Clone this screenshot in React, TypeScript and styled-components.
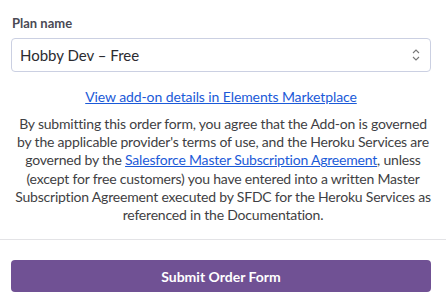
import styled, { createGlobalStyle } from 'styled-components'

const Global = createGlobalStyle`
  html, body { margin: 0; padding: 0; background: #fff; }
  body { font-family: Lato, "Open Sans", sans-serif; color: #3f3f44; }
`

export default function App() {
  return (
    <>
      <Global />
      <Page>
        <Section>
          <Label htmlFor="plan">Plan name</Label>
          <SelectWrap>
            <Select id="plan" defaultValue="hobby">
              <option value="hobby">Hobby Dev – Free</option>
            </Select>
            <Chevron width="8" height="14" viewBox="0 0 8 14">
              <path d="M1 5 L4 2 L7 5" />
              <path d="M1 9 L4 12 L7 9" />
            </Chevron>
          </SelectWrap>
          <Details>
            <a href="#">View add-on details in Elements Marketplace</a>
          </Details>
          <Terms>
            By submitting this order form, you agree that the Add-on is governed by the
            applicable provider's terms of use, and the Heroku Services are governed by
            the <a href="#">Salesforce Master Subscription Agreement</a>, unless (except
            for free customers) you have entered into a written Master Subscription
            Agreement executed by SFDC for the Heroku Services as referenced in the
            Documentation.
          </Terms>
        </Section>
        <Divider />
        <Footer>
          <Submit>Submit Order Form</Submit>
        </Footer>
      </Page>
    </>
  )
}

const Page = styled.div`
  width: 446px;
  display: flex;
  flex-direction: column;
`

const Section = styled.div`
  padding: 15px 15px 0 11px;
  display: flex;
  flex-direction: column;
`

const Label = styled.label`
  font-size: 13px;
  font-weight: 700;
  color: #4a4a55;
  margin-bottom: 7px;
  margin-left: 1px;
`

const SelectWrap = styled.div`
  position: relative;
`

const Select = styled.select`
  appearance: none;
  width: 100%;
  height: 34px;
  box-sizing: border-box;
  padding: 0 30px 0 8px;
  border: 1px solid #cbd0e2;
  border-radius: 4px;
  background: #fff;
  font-family: Lato, "Open Sans", sans-serif;
  font-size: 15px;
  color: #2b2b30;
  outline: none;
`

const Chevron = styled.svg`
  position: absolute;
  right: 11px;
  top: 10px;
  fill: none;
  stroke: #777;
  stroke-width: 1.1;
  pointer-events: none;
`

const Details = styled.div`
  margin-top: 16px;
  text-align: center;
  font-size: 14px;
  letter-spacing: -0.1px;
  a { color: #1b5ad8; text-decoration: underline; }
`

const Terms = styled.p`
  margin: 10px -4px 0 0;
  text-align: center;
  font-size: 14px;
  line-height: 18.2px;
  letter-spacing: -0.2px;
  color: #3f3f44;
  a { color: #1b5ad8; text-decoration: underline; }
`

const Divider = styled.hr`
  margin: 15px 0 0;
  border: 0;
  border-top: 1px solid #e3e3e6;
`

const Footer = styled.div`
  padding: 20px 15px 0 11px;
`

const Submit = styled.button`
  width: 100%;
  height: 32px;
  border: none;
  border-radius: 4px;
  background: #705194;
  color: #fff;
  font-family: Lato, "Open Sans", sans-serif;
  font-size: 14px;
  font-weight: 700;
  cursor: pointer;
`
